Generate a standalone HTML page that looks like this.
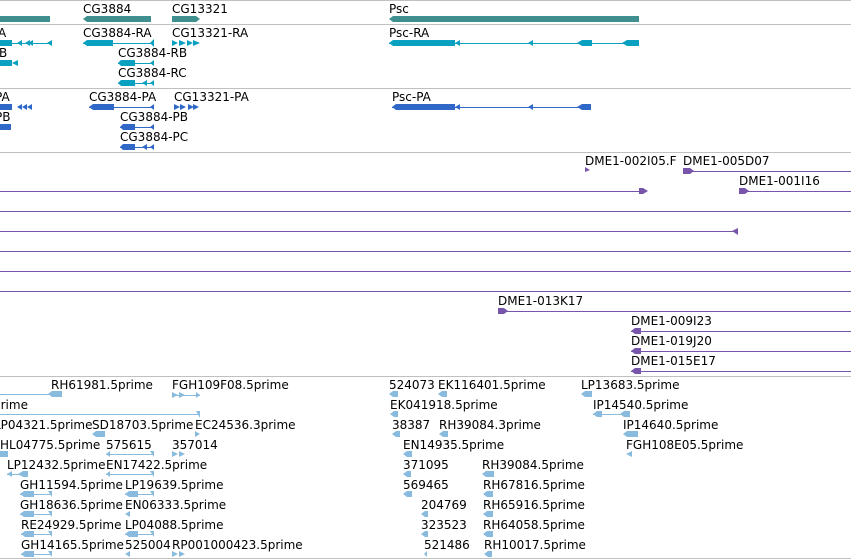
<!DOCTYPE html>
<html><head><meta charset="utf-8"><style>
html,body{margin:0;padding:0;background:#fff;width:851px;height:560px;overflow:hidden}
svg{display:block}
line{shape-rendering:crispEdges}
text{font-family:"DejaVu Sans","Liberation Sans",sans-serif;font-size:12px;fill:#000}
</style></head><body>
<svg width="851" height="560" viewBox="0 0 851 560" xmlns="http://www.w3.org/2000/svg">
<g stroke="#c0c0c0" stroke-width="1">
<line x1="0" y1="0.5" x2="851" y2="0.5"/>
<line x1="0" y1="24.5" x2="851" y2="24.5"/>
<line x1="0" y1="88.5" x2="851" y2="88.5"/>
<line x1="0" y1="152.5" x2="851" y2="152.5"/>
<line x1="0" y1="376.5" x2="851" y2="376.5"/>
<line x1="0" y1="558.5" x2="851" y2="558.5"/>
</g>

<g fill="#3f8f8f">
<rect x="0" y="16" width="50" height="6"/>
<polygon points="83,19 87,16 151,16 151,22 87,22"/>
<polygon points="172,16 196,16 200,19 196,22 172,22"/>
<polygon points="389,19 393,16 639,16 639,22 393,22"/>
</g>
<text x="83" y="13">CG3884</text>
<text x="172" y="13">CG13321</text>
<text x="389" y="13">Psc</text>

<g fill="#0aa0c0" stroke="#0aa0c0">
<line x1="0" y1="43.5" x2="52" y2="43.5" stroke-width="1"/>
<rect x="0" y="40" width="12" height="6" stroke="none"/>
<polygon points="17,43 22,40 22,46" stroke="none"/><polygon points="25,43 30,40 30,46" stroke="none"/><polygon points="28,43 33,40 33,46" stroke="none"/><polygon points="47,43 52,40 52,46" stroke="none"/>
<line x1="83" y1="43.5" x2="154" y2="43.5"/>
<polygon points="83,43 87,40 113,40 113,46 87,46" stroke="none"/>
<polygon points="150,43 154,39 154,47" stroke="none"/>
<polygon points="172,40 178,43 172,46" stroke="none"/><polygon points="179,40 186,43 179,46" stroke="none"/><polygon points="187,40 193,43 187,46" stroke="none"/><polygon points="193,40 200,43 193,46" stroke="none"/>
<line x1="389" y1="43.5" x2="639" y2="43.5"/>
<polygon points="389,43 393,40 455,40 455,46 393,46" stroke="none"/>
<polygon points="455,43 460,40 460,46" stroke="none"/>
<polygon points="528,43 533,40 533,46" stroke="none"/>
<polygon points="577,43 582,40 592,40 592,46 582,46" stroke="none"/>
<polygon points="622,43 627,40 639,40 639,46 627,46" stroke="none"/>
<rect x="0" y="60" width="12" height="6" stroke="none"/>
<polygon points="12,63 18,60 18,66" stroke="none"/>
<line x1="118" y1="63.5" x2="154" y2="63.5"/>
<polygon points="118,63 121,60 135,60 135,66 121,66" stroke="none"/>
<polygon points="150,63 154,60 154,66" stroke="none"/>
<line x1="118" y1="83.5" x2="154" y2="83.5"/>
<polygon points="118,83 121,80 135,80 135,86 121,86" stroke="none"/>
<polygon points="142,83 147,80 147,86" stroke="none"/><polygon points="150,83 154,80 154,86" stroke="none"/>
</g>
<text x="-2" y="37">A</text>
<text x="83" y="37">CG3884-RA</text>
<text x="172" y="37">CG13321-RA</text>
<text x="389" y="37">Psc-RA</text>
<text x="-1" y="57">B</text>
<text x="118" y="57">CG3884-RB</text>
<text x="118" y="77">CG3884-RC</text>

<g fill="#3068c8" stroke="#3068c8">
<rect x="0" y="104" width="12" height="6" stroke="none"/>
<polygon points="17,107 22,104 22,110" stroke="none"/><polygon points="22,107 27,104 27,110" stroke="none"/><polygon points="27,107 32,104 32,110" stroke="none"/>
<line x1="89" y1="107.5" x2="154" y2="107.5"/>
<polygon points="89,107 93,104 114,104 114,110 93,110" stroke="none"/>
<polygon points="150,107 154,104 154,110" stroke="none"/>
<polygon points="174,104 180,107 174,110" stroke="none"/><polygon points="180,104 186,107 180,110" stroke="none"/><polygon points="188,104 194,107 188,110" stroke="none"/><polygon points="193,104 199,107 193,110" stroke="none"/>
<line x1="392" y1="107.5" x2="591" y2="107.5"/>
<polygon points="392,107 396,104 455,104 455,110 396,110" stroke="none"/>
<polygon points="455,107 460,104 460,110" stroke="none"/>
<polygon points="528,107 533,104 533,110" stroke="none"/>
<polygon points="577,107 582,104 591,104 591,110 582,110" stroke="none"/>
<rect x="0" y="124" width="11" height="6" stroke="none"/>
<line x1="120" y1="127.5" x2="154" y2="127.5"/>
<polygon points="120,127 123,124 135,124 135,130 123,130" stroke="none"/>
<polygon points="150,127 154,124 154,130" stroke="none"/>
<line x1="120" y1="147.5" x2="154" y2="147.5"/>
<polygon points="120,147 123,144 135,144 135,150 123,150" stroke="none"/>
<polygon points="142,147 147,144 147,150" stroke="none"/><polygon points="150,147 154,144 154,150" stroke="none"/>
</g>
<text x="-5" y="101">PA</text>
<text x="89" y="101">CG3884-PA</text>
<text x="174" y="101">CG13321-PA</text>
<text x="392" y="101">Psc-PA</text>
<text x="-5" y="121">PB</text>
<text x="120" y="121">CG3884-PB</text>
<text x="120" y="141">CG3884-PC</text>

<g stroke="#7755aa" stroke-width="1" fill="#7755aa">
<polygon points="585,167 590,170 585,172" stroke="none"/>
<line x1="683" y1="171.5" x2="851" y2="171.5"/>
<polygon points="683,168 690,168 694,171 690,174 683,174" stroke="none"/>
<line x1="0" y1="191.5" x2="645" y2="191.5"/>
<polygon points="639,188 643,188 648,191 643,194 639,194" stroke="none"/>
<line x1="739" y1="191.5" x2="851" y2="191.5"/>
<polygon points="739,188 745,188 749,191 745,194 739,194" stroke="none"/>
<line x1="0" y1="211.5" x2="851" y2="211.5"/>
<line x1="0" y1="231.5" x2="738" y2="231.5"/>
<polygon points="732,231 738,228 738,235" stroke="none"/>
<line x1="0" y1="251.5" x2="851" y2="251.5"/>
<line x1="0" y1="271.5" x2="851" y2="271.5"/>
<line x1="0" y1="291.5" x2="851" y2="291.5"/>
<line x1="498" y1="311.5" x2="851" y2="311.5"/>
<polygon points="498,308 504,308 508,311 504,314 498,314" stroke="none"/>
<line x1="631" y1="331.5" x2="851" y2="331.5"/>
<polygon points="631,331 635,328 641,328 641,334 635,334" stroke="none"/>
<line x1="631" y1="351.5" x2="851" y2="351.5"/>
<polygon points="631,351 635,348 641,348 641,354 635,354" stroke="none"/>
<line x1="631" y1="371.5" x2="851" y2="371.5"/>
<polygon points="631,371 635,368 641,368 641,374 635,374" stroke="none"/>
</g>
<text x="585" y="165">DME1-002I05.F</text>
<text x="683" y="165">DME1-005D07</text>
<text x="739" y="185">DME1-001I16</text>
<text x="498" y="305">DME1-013K17</text>
<text x="631" y="325">DME1-009I23</text>
<text x="631" y="345">DME1-019J20</text>
<text x="631" y="365">DME1-015E17</text>

<g fill="#88bbdd" stroke="#88bbdd">
<line x1="0" y1="394.5" x2="56" y2="394.5"/>
<polygon points="48,394 52,391 62,391 62,397 52,397" stroke="none"/>
<polygon points="172,392 178,395 172,398" stroke="none"/><polygon points="179,392 185,395 179,398" stroke="none"/>
<line x1="172" y1="395.5" x2="200" y2="395.5"/><polygon points="196,392 200,395 196,398" stroke="none"/>
<line x1="0" y1="414.5" x2="200" y2="414.5"/><polygon points="196,411 200,411 200,418" stroke="none"/>
<polygon points="92,434 96,431 105,431 105,437 96,437" stroke="none"/>
<polygon points="195,431 200,434 195,437" stroke="none"/>
<rect x="0" y="451" width="8" height="6" stroke="none"/>
<line x1="106" y1="454.5" x2="154" y2="454.5"/><polygon points="106,454 110,451 110,457" stroke="none"/><polygon points="150,451 154,451 154,457" stroke="none"/>
<polygon points="172,451 178,454 172,457" stroke="none"/><polygon points="179,451 185,454 179,457" stroke="none"/>
<line x1="7" y1="474.5" x2="28" y2="474.5"/><polygon points="7,474 12,471 12,477" stroke="none"/><polygon points="18,474 23,471 28,471 28,477 23,477" stroke="none"/>
<line x1="106" y1="474.5" x2="154" y2="474.5"/><polygon points="106,474 110,471 110,477" stroke="none"/><polygon points="150,471 154,471 154,477" stroke="none"/>
<line x1="20" y1="494.5" x2="52" y2="494.5"/><polygon points="20,494 24,491 34,491 34,497 24,497" stroke="none"/><polygon points="48,491 52,491 52,497" stroke="none"/>
<line x1="125" y1="494.5" x2="154" y2="494.5"/><polygon points="125,494 129,491 138,491 138,497 129,497" stroke="none"/><polygon points="150,491 154,491 154,497" stroke="none"/>
<line x1="20" y1="514.5" x2="52" y2="514.5"/><polygon points="20,514 24,511 34,511 34,517 24,517" stroke="none"/><polygon points="48,511 52,511 52,517" stroke="none"/>
<polygon points="125,514 130,511 130,517" stroke="none"/>
<line x1="21" y1="534.5" x2="52" y2="534.5"/><polygon points="21,534 25,531 34,531 34,537 25,537" stroke="none"/><polygon points="48,531 52,531 52,537" stroke="none"/>
<line x1="125" y1="534.5" x2="154" y2="534.5"/><polygon points="125,534 129,531 138,531 138,537 129,537" stroke="none"/><polygon points="150,531 154,531 154,537" stroke="none"/>
<line x1="21" y1="554.5" x2="52" y2="554.5"/><polygon points="21,554 25,551 34,551 34,557 25,557" stroke="none"/><polygon points="48,551 52,551 52,557" stroke="none"/>
<polygon points="125,554 130,551 130,557" stroke="none"/>
<polygon points="172,551 178,554 172,557" stroke="none"/><polygon points="179,551 185,554 179,557" stroke="none"/>
<polygon points="389,394 393,391 398,391 398,397 393,397" stroke="none"/>
<polygon points="438,394 442,391 447,391 447,397 442,397" stroke="none"/>
<polygon points="581,394 585,391 592,391 592,397 585,397" stroke="none"/>
<polygon points="390,414 394,411 398,411 398,417 394,417" stroke="none"/>
<line x1="593" y1="414.5" x2="630" y2="414.5"/><polygon points="593,414 597,411 602,411 602,417 597,417" stroke="none"/><polygon points="620,414 624,411 630,411 630,417 624,417" stroke="none"/>
<polygon points="392,434 396,431 400,431 400,437 396,437" stroke="none"/>
<polygon points="439,434 443,431 448,431 448,437 443,437" stroke="none"/>
<polygon points="623,434 627,431 638,431 638,437 627,437" stroke="none"/>
<polygon points="403,454 407,451 412,451 412,457 407,457" stroke="none"/>
<polygon points="626,454 632,451 632,457" stroke="none"/>
<polygon points="403,474 407,471 411,471 411,477 407,477" stroke="none"/>
<polygon points="482,474 486,471 494,471 494,477 486,477" stroke="none"/>
<polygon points="403,494 407,491 412,491 412,497 407,497" stroke="none"/>
<polygon points="483,494 487,491 493,491 493,497 487,497" stroke="none"/>
<polygon points="421,514 425,511 428,511 428,517 425,517" stroke="none"/>
<polygon points="483,514 487,511 493,511 493,517 487,517" stroke="none"/>
<polygon points="421,534 425,531 428,531 428,537 425,537" stroke="none"/>
<polygon points="483,534 487,531 493,531 493,537 487,537" stroke="none"/>
<polygon points="424,554 427,551 427,557" stroke="none"/>
<polygon points="484,554 488,551 492,551 492,557 488,557" stroke="none"/>
</g>
<text x="51" y="389">RH61981.5prime</text>
<text x="172" y="389">FGH109F08.5prime</text>
<text x="389" y="389">524073</text>
<text x="438" y="389">EK116401.5prime</text>
<text x="581" y="389">LP13683.5prime</text>
<text x="-7" y="409">prime</text>
<text x="390" y="409">EK041918.5prime</text>
<text x="593" y="409">IP14540.5prime</text>
<text x="-6" y="429">LP04321.5prime</text>
<text x="92" y="429">SD18703.5prime</text>
<text x="195" y="429">EC24536.3prime</text>
<text x="392" y="429">38387</text>
<text x="439" y="429">RH39084.3prime</text>
<text x="623" y="429">IP14640.5prime</text>
<text x="0" y="449">HL04775.5prime</text>
<text x="106" y="449">575615</text>
<text x="172" y="449">357014</text>
<text x="403" y="449">EN14935.5prime</text>
<text x="626" y="449">FGH108E05.5prime</text>
<text x="7" y="469">LP12432.5prime</text>
<text x="106" y="469">EN17422.5prime</text>
<text x="403" y="469">371095</text>
<text x="482" y="469">RH39084.5prime</text>
<text x="20" y="489">GH11594.5prime</text>
<text x="125" y="489">LP19639.5prime</text>
<text x="403" y="489">569465</text>
<text x="483" y="489">RH67816.5prime</text>
<text x="20" y="509">GH18636.5prime</text>
<text x="125" y="509">EN06333.5prime</text>
<text x="421" y="509">204769</text>
<text x="483" y="509">RH65916.5prime</text>
<text x="21" y="529">RE24929.5prime</text>
<text x="125" y="529">LP04088.5prime</text>
<text x="421" y="529">323523</text>
<text x="483" y="529">RH64058.5prime</text>
<text x="21" y="549">GH14165.5prime</text>
<text x="125" y="549">525004</text>
<text x="172" y="549">RP001000423.5prime</text>
<text x="424" y="549">521486</text>
<text x="484" y="549">RH10017.5prime</text>
</svg>
</body></html>
